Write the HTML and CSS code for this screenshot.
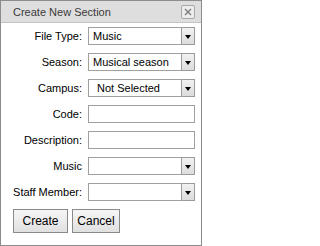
FILE: index.html
```html
<!DOCTYPE html>
<html>
<head>
<meta charset="utf-8">
<link rel="stylesheet" href="styles.css">
</head>
<body>
<div class="dialog">
  <div class="titlebar">
    <span class="title">Create New Section</span>
    <span class="close"><svg width="8" height="8" viewBox="0 0 8 8"><path d="M1 1L7 7M7 1L1 7" stroke="#777" stroke-width="1.2"/></svg></span>
  </div>
  <div class="form">
    <div class="row"><label>File Type:</label><div class="select"><span class="value">Music</span><span class="arrow"></span></div></div>
    <div class="row"><label>Season:</label><div class="select"><span class="value">Musical season</span><span class="arrow"></span></div></div>
    <div class="row"><label>Campus:</label><div class="select"><span class="value indent">Not Selected</span><span class="arrow"></span></div></div>
    <div class="row"><label>Code:</label><div class="input"></div></div>
    <div class="row"><label>Description:</label><div class="input"></div></div>
    <div class="row"><label>Music</label><div class="select"><span class="value"></span><span class="arrow"></span></div></div>
    <div class="row"><label>Staff Member:</label><div class="select"><span class="value"></span><span class="arrow"></span></div></div>
    <div class="buttons">
      <button class="btn create">Create</button>
      <button class="btn cancel">Cancel</button>
    </div>
  </div>
</div>
</body>
</html>
```
FILE: styles.css
```css
body {
  margin: 0;
  font-family: "Liberation Sans", Arial, sans-serif;
  background: #fff;
}
.dialog {
  width: 202px;
  height: 246px;
  box-sizing: border-box;
  border: 1px solid #8c8c8c;
  background: #fff;
}
.titlebar {
  height: 21px;
  border-bottom: 1px solid #c4c4c4;
  background: #dedede;
  display: flex;
  align-items: center;
  justify-content: space-between;
  padding: 0 6px 0 12px;
}
.title {
  font-size: 11px;
  color: #3a3a3a;
}
.close {
  width: 12px;
  height: 12px;
  border: 1px solid #a8a8a8;
  border-radius: 2px;
  background: #ececec;
  display: flex;
  align-items: center;
  justify-content: center;
}
.form {
  padding: 4px 6px 0 0;
}
.row {
  display: flex;
  align-items: center;
  height: 18px;
  margin-bottom: 8px;
}
.row label {
  width: 81px;
  margin-right: 6px;
  text-align: right;
  font-size: 11px;
  color: #000;
}
.select, .input {
  width: 107px;
  height: 18px;
  box-sizing: border-box;
  border: 1px solid #a0a0a0;
  display: flex;
  align-items: center;
  background: #fff;
}
.select {
  border-right: none;
}
.value {
  flex: 1;
  padding-left: 4px;
  font-size: 11px;
  color: #000;
}
.value.indent {
  padding-left: 8px;
}
.arrow {
  width: 14px;
  height: 18px;
  box-sizing: border-box;
  margin: -1px 0;
  border: 1px solid #9a9a9a;
  background: linear-gradient(#f2f2f2, #dcdcdc);
  display: flex;
  align-items: center;
  justify-content: center;
}
.arrow::after {
  content: "";
  border-left: 3.5px solid transparent;
  border-right: 3.5px solid transparent;
  border-top: 4px solid #000;
  margin-top: 1px;
}
.buttons {
  display: flex;
  gap: 4px;
  padding-left: 12px;
  margin-top: 2px;
}
.btn {
  height: 24px;
  box-sizing: border-box;
  border: 1px solid #8a8a8a;
  border-radius: 0;
  background: linear-gradient(#f6f6f6, #e0e0e0);
  font-family: "Liberation Sans", Arial, sans-serif;
  font-size: 12px;
  color: #000;
  padding: 0;
}
.create { width: 55px; }
.cancel { width: 48px; }
```
